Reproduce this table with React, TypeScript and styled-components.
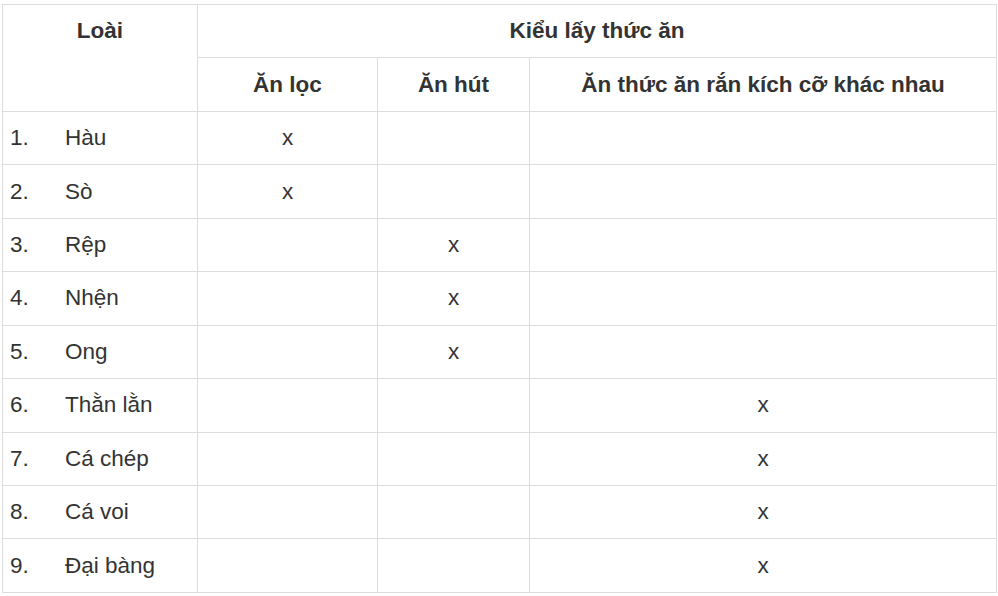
import React from "react";
import styled, { createGlobalStyle } from "styled-components";

const Global = createGlobalStyle`
  html, body { margin: 0; padding: 0; background: #fff; }
  body { font-family: "Liberation Sans", Arial, sans-serif; color: #333; }
`;

const Wrap = styled.div`
  padding: 4px 0 0 2px;
`;

const Table = styled.table`
  border-collapse: collapse;
  table-layout: fixed;
  width: 995px;
  font-size: 22.5px;
  line-height: 26px;
  color: #333;
`;

const HeadCell = styled.th<{ $top?: boolean }>`
  border: 1px solid #ddd;
  height: 53.45px;
  padding: 0 8px;
  font-weight: bold;
  text-align: center;
  vertical-align: ${(p) => (p.$top ? "top" : "middle")};
  padding-top: ${(p) => (p.$top ? "13px" : "0")};
  box-sizing: border-box;
`;

const Cell = styled.td<{ $center?: boolean }>`
  border: 1px solid #ddd;
  height: 53.45px;
  padding: 0 7px;
  text-align: ${(p) => (p.$center ? "center" : "left")};
  vertical-align: middle;
  box-sizing: border-box;
`;

const Num = styled.span`
  display: inline-block;
  width: 55px;
`;

const rows: [string, number][] = [
  ["Hàu", 0],
  ["Sò", 0],
  ["Rệp", 1],
  ["Nhện", 1],
  ["Ong", 1],
  ["Thằn lằn", 2],
  ["Cá chép", 2],
  ["Cá voi", 2],
  ["Đại bàng", 2],
];

export default function App() {
  return (
    <Wrap>
      <Global />
      <Table>
        <colgroup>
          <col style={{ width: 195 }} />
          <col style={{ width: 180 }} />
          <col style={{ width: 152 }} />
          <col />
        </colgroup>
        <thead>
          <tr>
            <HeadCell rowSpan={2} $top>
              Loài
            </HeadCell>
            <HeadCell colSpan={3}>Kiểu lấy thức ăn</HeadCell>
          </tr>
          <tr>
            <HeadCell>Ăn lọc</HeadCell>
            <HeadCell>Ăn hút</HeadCell>
            <HeadCell>Ăn thức ăn rắn kích cỡ khác nhau</HeadCell>
          </tr>
        </thead>
        <tbody>
          {rows.map(([name, k], i) => (
            <tr key={name}>
              <Cell>
                <Num>{i + 1}.</Num>
                {name}
              </Cell>
              {[0, 1, 2].map((c) => (
                <Cell key={c} $center>
                  {k === c ? "x" : ""}
                </Cell>
              ))}
            </tr>
          ))}
        </tbody>
      </Table>
    </Wrap>
  );
}
